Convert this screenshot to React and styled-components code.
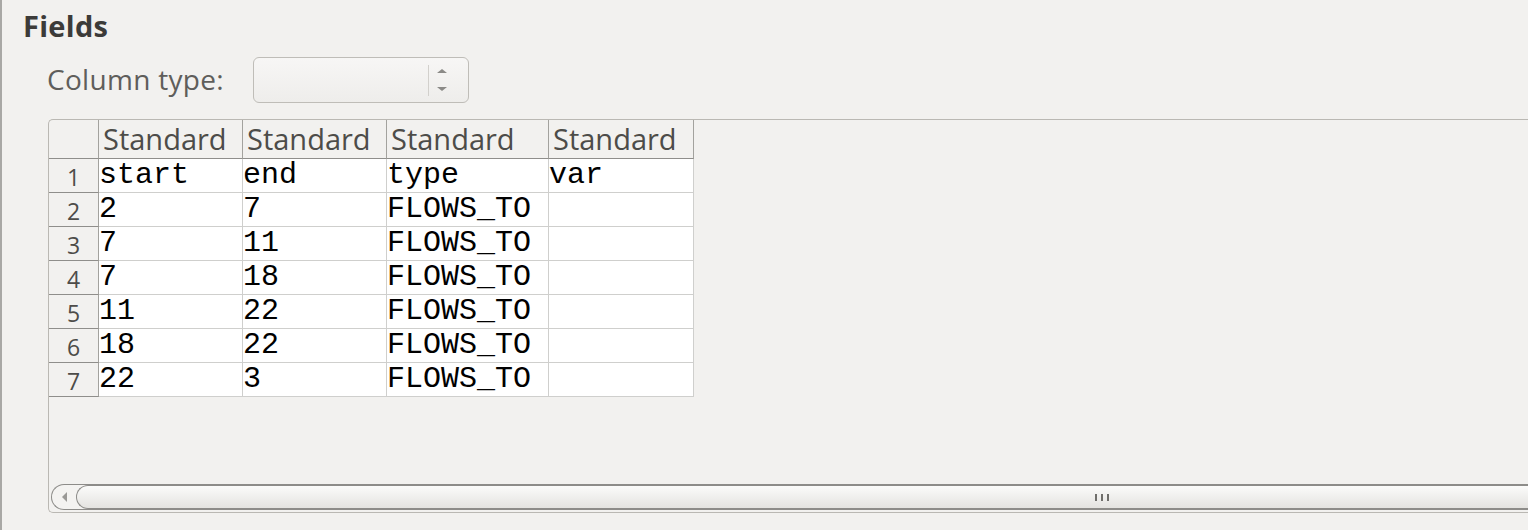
import React from 'react'
import styled, { createGlobalStyle } from 'styled-components'

const GlobalStyle = createGlobalStyle`
  html, body {
    margin: 0;
    padding: 0;
    background: #f2f1ef;
    overflow: hidden;
  }
`

const Page = styled.div`
  height: 530px;
  border-left: 2px solid #a9a8a5;
  box-sizing: border-box;
  font-family: "Open Sans", "Noto Sans", sans-serif;
  color: #3c3c3c;
  overflow: hidden;
`

const Title = styled.h2`
  margin: 0;
  padding: 8px 0 0 21px;
  height: 46px;
  box-sizing: border-box;
  font-size: 29px;
  font-weight: 700;
  line-height: 36px;
  letter-spacing: 0.3px;
  color: #3c3b39;
`

const FormRow = styled.div`
  display: flex;
  align-items: center;
  gap: 29px;
  padding-left: 45px;
  height: 62px;
  margin-top: 3px;
  margin-bottom: 8px;
`

const Label = styled.span`
  font-size: 28px;
  letter-spacing: 0.3px;
  color: #5f5e5b;
  padding-bottom: 2px;
`

const SpinBox = styled.div`
  width: 216px;
  height: 46px;
  box-sizing: border-box;
  border: 1px solid #bfbdb8;
  border-radius: 6px;
  background: linear-gradient(#f7f6f5, #eeedeb);
  display: flex;
  justify-content: flex-end;
  align-items: center;
  padding-right: 20px;
`

const SpinDivider = styled.div`
  width: 1px;
  height: 31px;
  background: #d2d0cc;
  margin-right: 7px;
`

const Frame = styled.div`
  margin-left: 46px;
  width: calc(100% + 40px);
  height: 394px;
  box-sizing: border-box;
  border: 1px solid #bab8b3;
  border-right: none;
  border-radius: 5px 0 0 5px;
  display: flex;
  flex-direction: column;
  justify-content: space-between;
`

const Grid = styled.div`
  display: grid;
  grid-template-columns: 50px 144px 144px 162px 145px;
  grid-template-rows: 39px repeat(7, 34px);
`

const Corner = styled.div`
  border-right: 1px solid #a3a29e;
  border-bottom: 1px solid #8f8e8b;
  border-top-left-radius: 5px;
`

const HeadCell = styled.div`
  box-sizing: border-box;
  border-right: 1px solid #a3a29e;
  border-bottom: 1px solid #8f8e8b;
  padding: 1px 0 0 4px;
  font-size: 29px;
  line-height: 36px;
  color: #4d4c49;
  white-space: nowrap;
  overflow: hidden;
`

const RowHead = styled.div`
  box-sizing: border-box;
  border-right: 1px solid #a3a29e;
  border-bottom: 1px solid #8f8e8b;
  display: flex;
  align-items: flex-end;
  justify-content: center;
  padding-bottom: 1px;
  font-size: 23px;
  line-height: 28px;
  color: #4d4c49;
`

const Cell = styled.div`
  box-sizing: border-box;
  background: #ffffff;
  border-right: 1px solid #cfcfcd;
  border-bottom: 1px solid #cfcfcd;
  font-family: "Liberation Mono", monospace;
  font-size: 30px;
  line-height: 32px;
  color: #000000;
  white-space: nowrap;
  overflow: hidden;
`

const ScrollBar = styled.div`
  margin: 0 0 2px 2px;
  height: 26px;
  box-sizing: border-box;
  border: 1px solid #8d8c89;
  border-right: none;
  border-radius: 13px 0 0 13px;
  background: #f4f3f1;
  display: flex;
  align-items: stretch;
`

const ArrowButton = styled.div`
  width: 22px;
  display: flex;
  align-items: center;
  justify-content: center;
  padding-left: 2px;
`

const Slider = styled.div`
  flex: 1;
  box-sizing: border-box;
  border: 1px solid #8d8c89;
  border-right: none;
  border-radius: 12px 0 0 12px;
  background: linear-gradient(#fbfbfa, #e4e3e0);
  display: flex;
  align-items: center;
  padding-left: 1018px;
`

const Grip = styled.div`
  display: flex;
  gap: 4px;
`

const GripBar = styled.span`
  width: 2px;
  height: 7px;
  background: #6f6e6b;
`

const columns = ['start', 'end', 'type', 'var']
const rows = [
  ['2', '7', 'FLOWS_TO', ''],
  ['7', '11', 'FLOWS_TO', ''],
  ['7', '18', 'FLOWS_TO', ''],
  ['11', '22', 'FLOWS_TO', ''],
  ['18', '22', 'FLOWS_TO', ''],
  ['22', '3', 'FLOWS_TO', ''],
]

function SpinArrows() {
  return (
    <svg width="12" height="24" viewBox="0 0 12 24">
      <path d="M1 5 L6 1 L11 5 Z" fill="#8b8a87" />
      <path d="M1 19 L6 23 L11 19 Z" fill="#8b8a87" />
    </svg>
  )
}

export default function App() {
  return (
    <>
      <GlobalStyle />
      <Page>
        <Title>Fields</Title>
        <FormRow>
          <Label>Column type:</Label>
          <SpinBox>
            <SpinDivider />
            <SpinArrows />
          </SpinBox>
        </FormRow>
        <Frame>
          <Grid>
            <Corner />
            {columns.map((c, i) => (
              <HeadCell key={i}>Standard</HeadCell>
            ))}
            <RowHead>1</RowHead>
            {columns.map((c) => (
              <Cell key={c}>{c}</Cell>
            ))}
            {rows.map((r, i) => (
              <React.Fragment key={i}>
                <RowHead>{i + 2}</RowHead>
                {r.map((v, j) => (
                  <Cell key={j}>{v}</Cell>
                ))}
              </React.Fragment>
            ))}
          </Grid>
          <ScrollBar>
            <ArrowButton>
              <svg width="6" height="10" viewBox="0 0 6 10">
                <path d="M5 0 L0 5 L5 10 Z" fill="#9a9996" />
              </svg>
            </ArrowButton>
            <Slider>
              <Grip>
                <GripBar />
                <GripBar />
                <GripBar />
              </Grip>
            </Slider>
          </ScrollBar>
        </Frame>
      </Page>
    </>
  )
}
